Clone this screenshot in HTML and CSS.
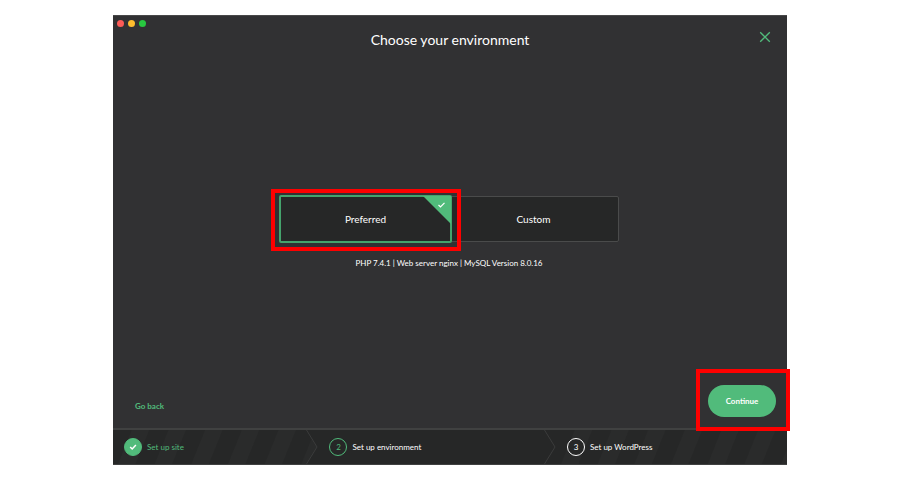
FILE: index.html
```html
<!DOCTYPE html>
<html lang="en">
<head>
  <meta charset="UTF-8">
  <meta name="viewport" content="width=device-width, initial-scale=1.0">
  <title>Choose your environment</title>
  <link rel="stylesheet" href="styles.css">
</head>
<body>
<div class="window">

  <header class="header">
    <div class="dots">
      <span class="dot red"></span>
      <span class="dot yellow"></span>
      <span class="dot green"></span>
    </div>
    <h1 class="title">Choose your environment</h1>
    <button class="close" type="button" aria-label="Close">
      <svg width="12" height="12" viewBox="0 0 12 12"><path d="M1.2 1.2L10.8 10.8M10.8 1.2L1.2 10.8" fill="none" stroke="#51bb7b" stroke-width="1.3"/></svg>
    </button>
  </header>

  <main class="main">
    <div class="options">
      <button class="option selected" type="button" aria-pressed="true">
        Preferred
        <svg class="corner" width="28" height="28" viewBox="0 0 28 28">
          <path d="M0 0H28V28Z" fill="#51bb7b"/>
          <path d="M15.5 9L17.5 11L21.5 6.8" fill="none" stroke="#fff" stroke-width="1.2"/>
        </svg>
        <span class="highlight"></span>
      </button>
      <button class="option" type="button" aria-pressed="false">Custom</button>
    </div>
    <p class="versions">PHP 7.4.1 | Web server nginx | MySQL Version 8.0.16</p>
  </main>

  <div class="actions">
    <a class="back" href="#">Go back</a>
    <button class="continue" type="button">Continue<span class="highlight"></span></button>
  </div>

  <!-- Progress steps -->
  <ol class="steps">
    <li class="step striped done">
      <span class="circle">
        <svg width="8" height="8" viewBox="0 0 8 8"><path d="M1.2 4L3.2 6L6.9 2.1" fill="none" stroke="#fff" stroke-width="1.5"/></svg>
      </span>
      Set up site
      <svg class="arrow" width="12" height="34" viewBox="0 0 12 34"><path d="M0 0H12V34H0L11 17Z" fill="#262727"/><path d="M0.5 0L11 17L0.5 34" fill="none" stroke="#3b3c3c"/></svg>
    </li>
    <li class="step current">
      <span class="circle">2</span>
      Set up environment
      <svg class="arrow" width="12" height="34" viewBox="0 0 12 34"><path d="M0.5 0L11 17L0.5 34" fill="none" stroke="#3b3c3c"/></svg>
    </li>
    <li class="step striped">
      <span class="circle">3</span>
      Set up WordPress
    </li>
  </ol>

</div>
</body>
</html>
```

FILE: styles.css
```css
* {
  box-sizing: border-box;
}

body {
  margin: 0;
  padding: 15px 113px;
  background-color: #fff;
  font-family: Lato, sans-serif;
  font-size: 8px;
  line-height: 12px;
  color: #fff;
}

button {
  padding: 0;
  border: none;
  background: none;
  font-family: inherit;
  color: inherit;
  cursor: pointer;
}

.window {
  display: flex;
  flex-direction: column;
  min-height: calc(100vh - 30px);
  border-top: 1px solid #484849;
  background-color: #313133;
}

/* Title bar */
.header {
  display: grid;
  grid-template-columns: 1fr auto 1fr;
  align-items: start;
  padding: 4px;
}

.dots {
  display: flex;
  gap: 4px;
}

.dot {
  width: 7px;
  height: 7px;
  border-radius: 50%;
}

.red {
  background-color: #fc5b57;
}

.yellow {
  background-color: #fdbc2e;
}

.green {
  background-color: #28c840;
}

.title {
  margin: 10px 0 0;
  font-size: 14px;
  line-height: 20px;
  font-weight: normal;
}

.close {
  justify-self: end;
  margin: 11px 12px 0 0;
  line-height: 0;
}

/* Environment options */
.main {
  flex: 1;
  display: flex;
  flex-direction: column;
  align-items: center;
  justify-content: center;
  padding: 24px 2px 0 0;
}

.options {
  display: flex;
  width: 50%;
  min-width: 340px;
}

.option {
  position: relative;
  flex: 1;
  height: 46px;
  border: 1px solid #4a4b4b;
  border-radius: 2px;
  background-color: #262727;
  font-size: 10px;
}

.option.selected {
  flex: 0 0 173px;
  height: 48px;
  margin-bottom: -1px;
  border: 2px solid #44a36c;
  z-index: 1;
}

.option + .option {
  margin-top: 1px;
  margin-left: -4px;
}

.corner {
  position: absolute;
  top: -1px;
  right: -1px;
}

/* Red frame around the controls to click */
.highlight {
  position: absolute;
  border: 4px solid #fe0000;
  pointer-events: none;
}

.option .highlight {
  inset: -8px -11px -10px -10px;
}

.continue .highlight {
  inset: -16px -14px -14px -12px;
}

.versions {
  margin: 15px 0 0;
}

/* Go back / Continue */
.actions {
  display: flex;
  align-items: flex-end;
  justify-content: space-between;
  padding: 0 11px 11px 22px;
}

.back {
  margin-bottom: 5px;
  font-weight: bold;
  color: #51bb7b;
  text-decoration: none;
}

.continue {
  position: relative;
  z-index: 1;
  width: 68px;
  height: 32px;
  border-radius: 16px;
  background-color: #51bb7b;
  font-size: 8px;
  font-weight: bold;
}

.steps {
  display: flex;
  margin: 0;
  padding: 0;
  list-style: none;
  border-top: 2px solid #404141;
  border-bottom: 1px solid #404141;
  background-color: #262727;
}

.step {
  position: relative;
  flex: 1 1 auto;
  display: flex;
  align-items: center;
  gap: 5px;
  height: 34px;
  padding-left: 11px;
}

.striped {
  background-image: repeating-linear-gradient(112deg, #262727 0 17px, #2a2b2b 18px 33px, #262727 34px);
}

.circle {
  display: flex;
  align-items: center;
  justify-content: center;
  width: 18px;
  height: 18px;
  border: 1px solid #fff;
  border-radius: 50%;
  background-color: #262727;
}

.done {
  color: #51bb7b;
}

.done .circle {
  border-color: #51bb7b;
  background-color: #51bb7b;
}

.current .circle {
  border-color: #51bb7b;
  color: #51bb7b;
}

.arrow {
  position: absolute;
  top: 0;
  right: 0;
}
```
